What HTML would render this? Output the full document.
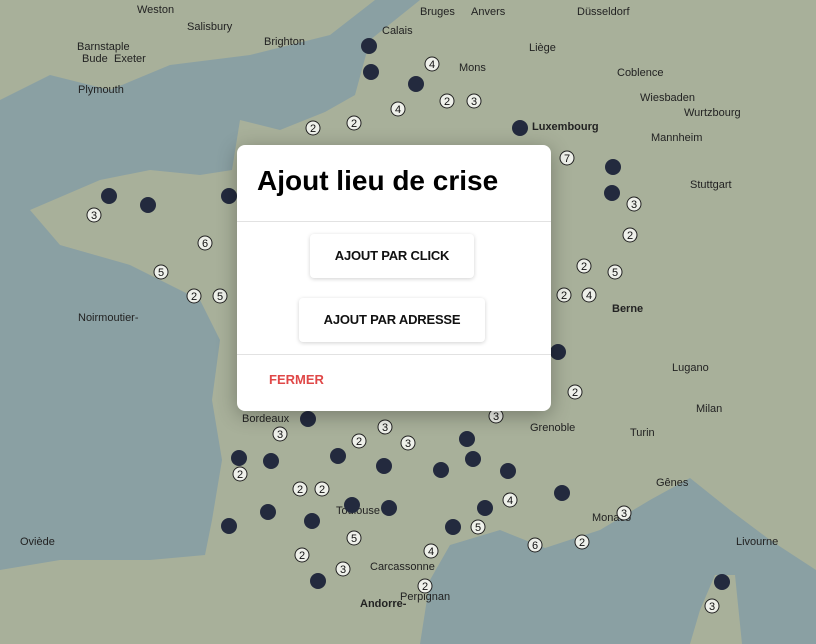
<!DOCTYPE html>
<html><head><meta charset="utf-8"><style>
html,body{margin:0;padding:0;width:816px;height:644px;overflow:hidden;font-family:"Liberation Sans",sans-serif;}
#map{position:absolute;left:0;top:0;}
.dlg{position:absolute;left:237px;top:145px;width:314px;height:266px;background:#fff;border-radius:8px;box-shadow:0 4px 20px rgba(0,0,0,.3);}
.t{position:absolute;left:20px;top:20px;font-size:28px;font-weight:bold;color:#000;letter-spacing:0px;}
.hr{position:absolute;left:0;width:314px;height:1px;background:#e2e2e2;}
.b{position:absolute;height:44px;background:#fff;border-radius:4px;box-shadow:0 1px 4px rgba(0,0,0,.18);font-size:13px;font-weight:bold;color:#111;text-align:center;line-height:44px;letter-spacing:-0.2px;}
.f{position:absolute;left:32px;top:227px;font-size:13px;font-weight:bold;color:#e04848;}
</style></head><body>
<svg id="map" width="816" height="644" viewBox="0 0 816 644">
<rect width="816" height="644" fill="#a8b09a"/>
<polygon fill="#8aa0a3" points="0,100 50,75 110,90 170,65 250,55 330,35 375,0 420,0 370,40 355,95 325,112 280,130 240,120 232,170 200,175 150,170 100,180 30,210 60,245 130,265 200,300 220,340 212,400 222,460 212,520 205,555 150,560 60,560 0,570"/>
<polygon fill="#8aa0a3" points="420,644 430,580 450,545 500,530 545,548 600,530 650,500 690,478 730,510 770,540 816,570 816,644"/>
<polygon fill="#a8b09a" points="715,575 735,575 742,644 690,644 700,610"/>
<g font-size="11" fill="#222" font-family="Liberation Sans,sans-serif">
<text x="137" y="13">Weston</text><text x="187" y="30">Salisbury</text><text x="77" y="50">Barnstaple</text><text x="82" y="62">Bude</text><text x="114" y="62">Exeter</text><text x="78" y="93">Plymouth</text><text x="264" y="45">Brighton</text><text x="382" y="34">Calais</text><text x="420" y="15">Bruges</text><text x="471" y="15">Anvers</text><text x="577" y="15">Düsseldorf</text><text x="529" y="51">Liège</text><text x="459" y="71">Mons</text><text x="617" y="76">Coblence</text><text x="640" y="101">Wiesbaden</text><text x="684" y="116">Wurtzbourg</text><text x="532" y="130" font-weight="bold">Luxembourg</text><text x="651" y="141">Mannheim</text><text x="690" y="188">Stuttgart</text><text x="612" y="312" font-weight="bold">Berne</text><text x="672" y="371">Lugano</text><text x="696" y="412">Milan</text><text x="630" y="436">Turin</text><text x="530" y="431">Grenoble</text><text x="242" y="422">Bordeaux</text><text x="336" y="514">Toulouse</text><text x="656" y="486">Gênes</text><text x="592" y="521">Monaco</text><text x="736" y="545">Livourne</text><text x="20" y="545">Oviède</text><text x="360" y="607" font-weight="bold">Andorre-</text><text x="400" y="600">Perpignan</text><text x="370" y="570">Carcassonne</text><text x="78" y="321">Noirmoutier-</text></g>
<g fill="#232a3e">
<circle cx="369" cy="46" r="8"/><circle cx="371" cy="72" r="8"/><circle cx="416" cy="84" r="8"/><circle cx="520" cy="128" r="8"/><circle cx="613" cy="167" r="8"/><circle cx="612" cy="193" r="8"/><circle cx="109" cy="196" r="8"/><circle cx="148" cy="205" r="8"/><circle cx="229" cy="196" r="8"/><circle cx="558" cy="352" r="8"/><circle cx="308" cy="419" r="8"/><circle cx="239" cy="458" r="8"/><circle cx="271" cy="461" r="8"/><circle cx="338" cy="456" r="8"/><circle cx="384" cy="466" r="8"/><circle cx="441" cy="470" r="8"/><circle cx="467" cy="439" r="8"/><circle cx="473" cy="459" r="8"/><circle cx="508" cy="471" r="8"/><circle cx="562" cy="493" r="8"/><circle cx="229" cy="526" r="8"/><circle cx="268" cy="512" r="8"/><circle cx="312" cy="521" r="8"/><circle cx="352" cy="505" r="8"/><circle cx="389" cy="508" r="8"/><circle cx="453" cy="527" r="8"/><circle cx="485" cy="508" r="8"/><circle cx="318" cy="581" r="8"/><circle cx="722" cy="582" r="8"/>
</g>
<g fill="#eef0ea" stroke="#222" stroke-width="1"><circle cx="94" cy="215" r="7"/><circle cx="205" cy="243" r="7"/><circle cx="161" cy="272" r="7"/><circle cx="194" cy="296" r="7"/><circle cx="220" cy="296" r="7"/><circle cx="432" cy="64" r="7"/><circle cx="398" cy="109" r="7"/><circle cx="447" cy="101" r="7"/><circle cx="474" cy="101" r="7"/><circle cx="313" cy="128" r="7"/><circle cx="354" cy="123" r="7"/><circle cx="567" cy="158" r="7"/><circle cx="634" cy="204" r="7"/><circle cx="630" cy="235" r="7"/><circle cx="584" cy="266" r="7"/><circle cx="615" cy="272" r="7"/><circle cx="564" cy="295" r="7"/><circle cx="589" cy="295" r="7"/><circle cx="575" cy="392" r="7"/><circle cx="280" cy="434" r="7"/><circle cx="385" cy="427" r="7"/><circle cx="359" cy="441" r="7"/><circle cx="408" cy="443" r="7"/><circle cx="496" cy="416" r="7"/><circle cx="240" cy="474" r="7"/><circle cx="300" cy="489" r="7"/><circle cx="322" cy="489" r="7"/><circle cx="510" cy="500" r="7"/><circle cx="478" cy="527" r="7"/><circle cx="354" cy="538" r="7"/><circle cx="431" cy="551" r="7"/><circle cx="535" cy="545" r="7"/><circle cx="582" cy="542" r="7"/><circle cx="624" cy="513" r="7"/><circle cx="302" cy="555" r="7"/><circle cx="343" cy="569" r="7"/><circle cx="425" cy="586" r="7"/><circle cx="712" cy="606" r="7"/></g>
<g font-size="11" fill="#111" text-anchor="middle" font-family="Liberation Sans,sans-serif">
<text x="94" y="219">3</text><text x="205" y="247">6</text><text x="161" y="276">5</text><text x="194" y="300">2</text><text x="220" y="300">5</text><text x="432" y="68">4</text><text x="398" y="113">4</text><text x="447" y="105">2</text><text x="474" y="105">3</text><text x="313" y="132">2</text><text x="354" y="127">2</text><text x="567" y="162">7</text><text x="634" y="208">3</text><text x="630" y="239">2</text><text x="584" y="270">2</text><text x="615" y="276">5</text><text x="564" y="299">2</text><text x="589" y="299">4</text><text x="575" y="396">2</text><text x="280" y="438">3</text><text x="385" y="431">3</text><text x="359" y="445">2</text><text x="408" y="447">3</text><text x="496" y="420">3</text><text x="240" y="478">2</text><text x="300" y="493">2</text><text x="322" y="493">2</text><text x="510" y="504">4</text><text x="478" y="531">5</text><text x="354" y="542">5</text><text x="431" y="555">4</text><text x="535" y="549">6</text><text x="582" y="546">2</text><text x="624" y="517">3</text><text x="302" y="559">2</text><text x="343" y="573">3</text><text x="425" y="590">2</text><text x="712" y="610">3</text></g>
</svg>
<div class="dlg">
<div class="t">Ajout lieu de crise</div>
<div class="hr" style="top:76px"></div>
<div class="b" style="left:73px;top:89px;width:164px">AJOUT PAR CLICK</div>
<div class="b" style="left:62px;top:153px;width:186px">AJOUT PAR ADRESSE</div>
<div class="hr" style="top:209px"></div>
<div class="f">FERMER</div>
</div>
</body></html>
